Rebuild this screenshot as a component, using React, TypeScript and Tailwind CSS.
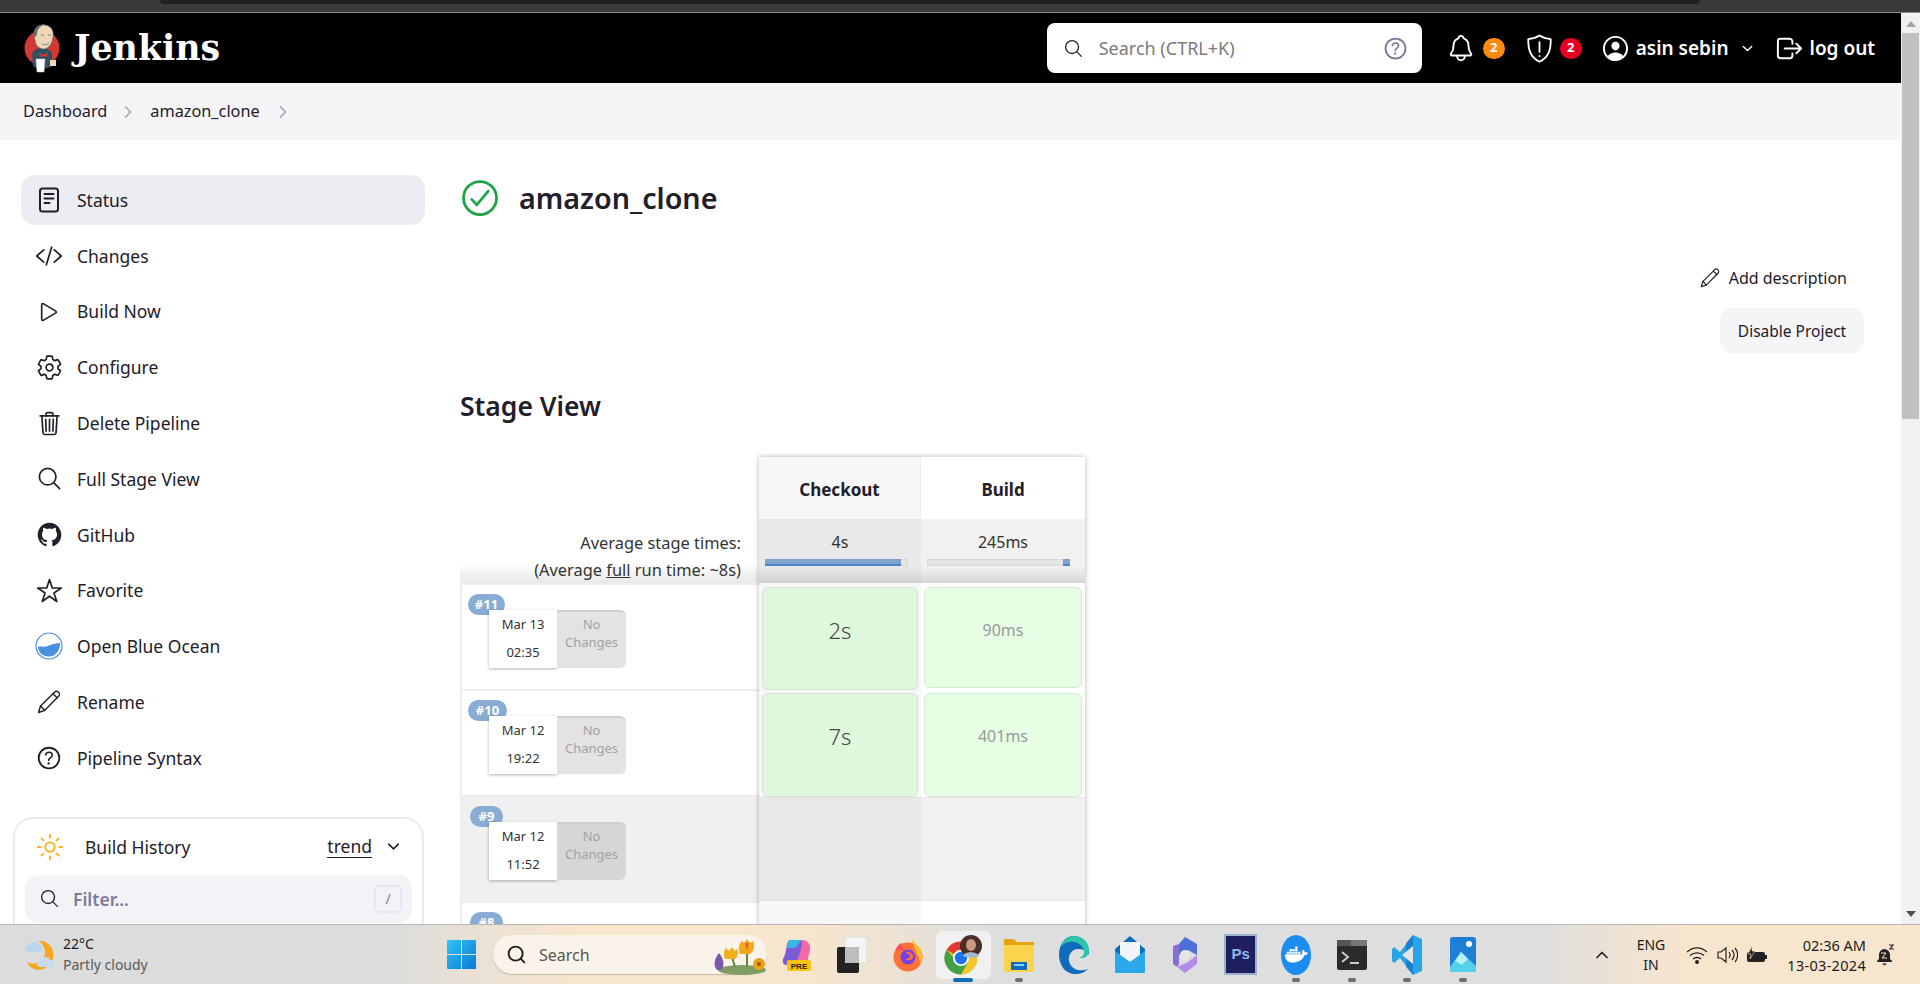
import { ChevronUp, Search } from 'lucide-react';
import type { ReactNode } from 'react';
import { FaDocker } from 'react-icons/fa';
import {
  IoChevronDown,
  IoChevronForward,
  IoCheckmarkCircleOutline,
  IoCodeSlashOutline,
  IoHelpCircleOutline,
  IoLogoGithub,
  IoLogOutOutline,
  IoNotificationsOutline,
  IoPersonCircleOutline,
  IoPlayOutline,
  IoSearchOutline,
  IoSettingsOutline,
  IoStarOutline,
  IoSunnyOutline,
  IoTrashOutline,
} from 'react-icons/io5';

const sans = 'font-["Noto_Sans",sans-serif]';

function StatusIcon() {
  return (
    <svg width="22" height="26" viewBox="0 0 22 26" fill="none" stroke="currentColor" strokeWidth="2" strokeLinecap="round">
      <rect x="2" y="1.5" width="18" height="23" rx="2.5" />
      <path d="M6.5 7h9M6.5 11.5h9M6.5 16h5" />
    </svg>
  );
}

function OceanIcon() {
  return (
    <svg width="28" height="28" viewBox="0 0 28 28">
      <circle cx="14" cy="14" r="13" fill="#fff" stroke="#4a90e2" strokeWidth="1.2" />
      <path d="M3 15c3-1 5 0 8-.5s6-3 14-3.5c.6 7-4.500 13.500-11 13.500S3 20 3 15z" fill="#4a90e2" />
    </svg>
  );
}

function PencilIcon({ size }: { size: number }) {
  return (
    <svg width={size} height={size} viewBox="0 0 24 24" fill="none" stroke="currentColor" strokeWidth="1.400" strokeLinejoin="round" strokeLinecap="round">
      <path d="M1.500 22.500l2-6.500L17.500 2.200c1.200-1.200 3-1.100 4.100 0 1.100 1.100 1.200 2.900 0 4.100L7.800 20.300z" />
      <path d="M3.500 16l4.300 4.300M16 3.700l4.300 4.300" />
    </svg>
  );
}

const navItems: { label: string; icon: ReactNode }[] = [
  { label: 'Changes', icon: <IoCodeSlashOutline size={28} /> },
  { label: 'Build Now', icon: <IoPlayOutline size={26} /> },
  { label: 'Configure', icon: <IoSettingsOutline size={27} /> },
  { label: 'Delete Pipeline', icon: <IoTrashOutline size={27} /> },
  { label: 'Full Stage View', icon: <IoSearchOutline size={27} /> },
  { label: 'GitHub', icon: <IoLogoGithub size={27} /> },
  { label: 'Favorite', icon: <IoStarOutline size={27} /> },
  { label: 'Open Blue Ocean', icon: <OceanIcon /> },
  { label: 'Rename', icon: <PencilIcon size={24} /> },
  { label: 'Pipeline Syntax', icon: <IoHelpCircleOutline size={30} /> },
];

const builds = [
  { id: '#11', date: 'Mar 13', time: '02:35', badge: 'w-[37px]', row: 'bg-white', box: 'bg-[#e3e3e3]' },
  { id: '#10', date: 'Mar 12', time: '19:22', badge: 'w-[39px]', row: 'bg-white', box: 'bg-[#e3e3e3]' },
  { id: '#9', date: 'Mar 12', time: '11:52', badge: 'w-[33px] ml-[2px]', row: 'bg-[#f0f0f0]', box: 'bg-[#d6d6d6]' },
  { id: '#8', date: 'Mar 12', time: '11:40', badge: 'w-[33px] ml-[2px]', row: 'bg-white', box: 'bg-[#e3e3e3]' },
];

function JenkinsLogo() {
  return (
    <svg width="38" height="50" viewBox="0 0 38 50">
      <circle cx="19" cy="25" r="17.500" fill="#d33833" />
      <path d="M9 32c1-5 5-7 10-7s10 2 10 7l1 10c-5 5-17 5-20 1z" fill="#335061" />
      <path d="M11 10c1-6 6-9 11-8 6 1 9 5 8 12-1 6-3 11-9 12-5 0-9-4-9-9-1-2-1-5-1-7z" fill="#f0d6b7" stroke="#49728b" strokeWidth=".6" />
      <path d="M11 15C9 8 13 1 22 1.500 17 3 14 6 14 12z" fill="#6d6b6d" />
      <path d="M16 30l4 2 5-3-1 5-3-1-4 1z" fill="#d33833" />
      <path d="M13 36h9l-1 13h-7z" fill="#fff" stroke="#ccc" strokeWidth=".5" />
      <path d="M27 37h6v6h-6z" fill="#f0d6b7" />
      <path d="M18 12h3M25 12h3M19 21c2 1 5 1 7-1" stroke="#49728b" strokeWidth=".8" fill="none" />
    </svg>
  );
}

function ShieldIcon() {
  return (
    <svg width="27" height="29" viewBox="0 0 25 27" fill="none" stroke="#fff" strokeWidth="1.7" strokeLinecap="round" strokeLinejoin="round">
      <path d="M12.500 1.500c3 2 6 3 10.500 3.300 0 9-1.500 16.700-10.500 21-9-4.300-10.500-12-10.500-21 4.500-.3 7.500-1.300 10.500-3.300z" />
      <path d="M12.500 7.500v9M12.500 20.500v.1" />
    </svg>
  );
}

function Header() {
  return (
    <header className="flex h-[70px] items-center bg-black text-white">
      <div className="ml-[23px]">
        <JenkinsLogo />
      </div>
      <span className="ml-[13px] font-['DejaVu_Serif',serif] text-[34.800px] leading-none font-bold">Jenkins</span>
      <div className="ml-auto flex h-[50px] w-[375px] items-center rounded-lg bg-white pr-[12px] pl-[16px]">
        <IoSearchOutline className="text-[#222]" size={21} />
        <span className="ml-[15px] pt-[1px] text-[18px] text-[#7b7b7b]">Search (CTRL+K)</span>
        <IoHelpCircleOutline className="ml-auto text-[#77779a]" size={29} />
      </div>
      <IoNotificationsOutline className="ml-[24px]" size={30} />
      <span className="ml-[7px] grid h-[21px] w-[22px] place-items-center rounded-full bg-[#ff8a0c] text-[13px] font-bold">2</span>
      <span className="ml-[21px]">
        <ShieldIcon />
      </span>
      <span className="ml-[7px] grid h-[21px] w-[22px] place-items-center rounded-full bg-[#e6001f] text-[13px] font-bold">2</span>
      <IoPersonCircleOutline className="ml-[18px]" size={31} />
      <span className="ml-[5px] text-[19px] font-semibold">asin sebin</span>
      <IoChevronDown className="ml-[11px]" size={15} />
      <IoLogOutOutline className="ml-[19px]" size={31} />
      <span className="mr-[26px] ml-[5px] text-[19px] font-semibold">log out</span>
    </header>
  );
}

function Breadcrumb() {
  return (
    <nav className="flex h-[57px] items-center bg-[#f5f5f7] pl-[23px] text-[16.300px] text-[#1f2029]">
      <span>Dashboard</span>
      <IoChevronForward className="ml-[12px] text-[#a9a9b8]" size={18} />
      <span className="ml-[13px]">amazon_clone</span>
      <IoChevronForward className="ml-[14px] text-[#a9a9b8]" size={18} />
    </nav>
  );
}

function Sidebar() {
  return (
    <aside className="w-[460px] shrink-0 pt-[35px] pl-[13px] text-[17.500px] text-[#1f2029]">
      <div className="ml-[8px] flex h-[50px] w-[404px] items-center rounded-[14px] bg-[#ecedf2]">
        <span className="grid w-[56px] place-items-center">
          <StatusIcon />
        </span>
        Status
      </div>
      {navItems.map((item) => (
        <div className="mt-[5.800px] ml-[8px] flex h-[50px] items-center" key={item.label}>
          <span className="grid w-[56px] place-items-center">{item.icon}</span>
          {item.label}
        </div>
      ))}
      <div className="mt-[34px] h-[180px] w-[411px] rounded-[20px] border-2 border-[#ebecf1] px-[10px]">
        <div className="flex h-[56px] items-center">
          <IoSunnyOutline className="ml-[10px] text-[#feb019]" size={30} />
          <span className="ml-[20px]">Build History</span>
          <span className="ml-auto border-b border-[#1f2029] leading-[21px]">trend</span>
          <IoChevronDown className="mr-[10px] ml-[13px]" size={17} />
        </div>
        <div className="flex h-[48px] items-center rounded-[14px] bg-[#f2f2f7] pr-[10px] pl-[14px]">
          <IoSearchOutline size={21} />
          <span className="ml-[13px] font-semibold text-[#7c7c96]">Filter...</span>
          <span className="ml-auto grid size-[28px] place-items-center rounded-md border-2 border-[#e6e6ee] text-[14px] text-[#7c7c96]">/</span>
        </div>
      </div>
    </aside>
  );
}

function BuildRow({ build }: { build: (typeof builds)[number] }) {
  return (
    <div className={`h-[106px] border-t-2 border-l-2 border-[#ededed] pt-[9px] pl-[6px] ${build.row}`}>
      <div className={`flex h-[21px] items-center justify-center rounded-full bg-[#88acd4] text-[13px] font-bold text-white ${build.badge}`}>{build.id}</div>
      <div className="-mt-[5px] ml-[21px] flex h-[58px] w-[137px] text-[13px]">
        <div className="flex w-[68px] flex-col items-center justify-around bg-white py-[1px] text-[#333] shadow-[0_1px_3px_rgba(0,0,0,.3)]">
          <span>{build.date}</span>
          <span>{build.time}</span>
        </div>
        <div className={`flex w-[69px] flex-col items-center rounded-r-md border-t-2 border-[#cfcfcf] pt-[3px] leading-[18px] text-[#a2a2a2] ${build.box}`}>
          <span>No</span>
          <span>Changes</span>
        </div>
      </div>
    </div>
  );
}

function TimeBar({ fill }: { fill: 'start' | 'end' }) {
  return (
    <div className={`ml-[6px] flex h-[7px] w-[143px] bg-[#e4e4e4] shadow-[inset_0_0_0_1px_#d8d8d8] ${fill === 'end' ? 'justify-end' : ''}`}>
      <div className={`h-full border-b-2 border-[#4f80d0] bg-[#7fa3cf] ${fill === 'end' ? 'w-[7px]' : 'w-[136px]'}`} />
    </div>
  );
}

function StageTable() {
  return (
    <div className="mt-[35px] flex">
      <div className="w-[299px]">
        <div className="h-[126px] bg-gradient-to-b from-white from-[85%] to-[#e8e8e8] pt-[72px] pr-[18px] text-right text-[16.400px] leading-[27px] text-[#333]">
          <div>Average stage times:</div>
          <div>
            (Average <span className="underline">full</span> run time: ~8s)
          </div>
        </div>
        {builds.map((build) => (
          <BuildRow build={build} key={build.id} />
        ))}
      </div>
      <div className="flex h-[600px] shadow-[0_0_5px_rgba(0,0,0,.3)]">
        <div className="w-[162px] bg-[#f7f7f7]">
          <div className="flex h-[62px] items-center justify-center border-r border-[#eee] pt-[4px] text-[17px] font-bold text-[#1f2029]">Checkout</div>
          <div className="h-[64px] bg-gradient-to-b from-[#e9e9e9] from-[75%] to-[#cfcfcf] pt-[13px] text-center text-[16px] leading-[20px] text-[#333]">
            4s
            <div className="mt-[7px]">
              <TimeBar fill="start" />
            </div>
          </div>
          <div className="mx-[3px] mt-[4px] grid h-[103px] place-items-center rounded-md border border-[#cfe6cf] bg-[#dff7dd] pb-[16px] text-[22px] font-light text-[#444]">2s</div>
          <div className="mx-[3px] mt-[3px] grid h-[104px] place-items-center rounded-md border border-[#cfe6cf] bg-[#dff7dd] pb-[18px] text-[22px] font-light text-[#444]">7s</div>
          <div className="h-[104px] border-y border-[#e2e2e2] bg-[#e9e9e9]" />
        </div>
        <div className="w-[164px] bg-white">
          <div className="flex h-[62px] items-center justify-center pt-[4px] text-[17px] font-bold text-[#1f2029]">Build</div>
          <div className="h-[64px] bg-gradient-to-b from-[#f1f1f1] from-[75%] to-[#d6d6d6] pt-[13px] text-center text-[16px] leading-[20px] text-[#333]">
            245ms
            <div className="mt-[7px]">
              <TimeBar fill="end" />
            </div>
          </div>
          <div className="mx-[3px] mt-[4px] grid h-[101px] place-items-center rounded-md border border-[#d4ead2] bg-[#e6ffe4] pb-[16px] text-[16px] text-[#999]">90ms</div>
          <div className="mx-[3px] mt-[5px] grid h-[104px] place-items-center rounded-md border border-[#d4ead2] bg-[#e6ffe4] pb-[18px] text-[16px] text-[#999]">401ms</div>
          <div className="h-[104px] border-y border-[#e8e8e8] bg-[#f1f1f1]" />
        </div>
      </div>
    </div>
  );
}

function Content() {
  return (
    <main className="min-w-0 flex-1 pt-[35px] pr-[37px] text-[#1f2029]">
      <div className="flex h-[46px] items-center">
        <IoCheckmarkCircleOutline className="-ml-[2px] text-[#1ea446]" size={44} />
        <h1 className="ml-[17px] text-[28.700px] font-semibold">amazon_clone</h1>
      </div>
      <div className="mt-[44px] flex h-[26px] items-center justify-end pr-[17px] text-[16px]">
        <span className="mr-[9px]">
          <PencilIcon size={20} />
        </span>
        Add description
      </div>
      <div className="mt-[17px] flex justify-end">
        <div className="grid h-[45px] w-[144px] place-items-center rounded-xl bg-[#f5f5f7] pt-[2px] text-[15.500px]">Disable Project</div>
      </div>
      <h2 className="mt-[37px] text-[26.500px] leading-[32px] font-semibold">Stage View</h2>
      <StageTable />
    </main>
  );
}

function Scrollbar() {
  return (
    <div className="flex w-[19px] shrink-0 flex-col items-center bg-[#f1f1f1]">
      <div className="mt-[8px] size-0 border-x-[5px] border-b-[6px] border-x-transparent border-b-[#a3a3a3]" />
      <div className="mt-[6px] h-[386px] w-[17px] bg-[#c1c1c1]" />
      <div className="mt-auto mb-[7px] size-0 border-x-[5px] border-t-[6px] border-x-transparent border-t-[#505050]" />
    </div>
  );
}

function WeatherIcon() {
  return (
    <svg width="32" height="36" viewBox="0 0 32 36">
      <path d="M14 4c10-1 17 7 15 17-2 9-12 15-21 10-2-1-4-4-5-6 9 4 18 0 18-10 0-5-3-9-7-11z" fill="#f6a623" />
      <path d="M1 12c0-3 2-4 4-4 1-4 8-4 9 0 3 0 4 2 4 4s-1 3-3 3H4c-2 0-3-1-3-3z" fill="#bcd3f0" />
      <path d="M13 27c0-3 2-4 4-4 1-4 8-4 9 0 3 0 4 2 4 4s-1 3-3 3H16c-2 0-3-1-3-3z" fill="#c7daf3" />
    </svg>
  );
}

function WindowsLogo() {
  return (
    <svg width="29" height="29" viewBox="0 0 29 29">
      <defs>
        <linearGradient id="win" x1="0" y1="0" x2="1" y2="1">
          <stop offset="0" stopColor="#2fc4f7" />
          <stop offset="1" stopColor="#0a78d4" />
        </linearGradient>
      </defs>
      <path d="M1 0h13v14H0V1a1 1 0 0 1 1-1zM15 0h13a1 1 0 0 1 1 1v13H15zM0 15h14v14H1a1 1 0 0 1-1-1zM15 15h14v13a1 1 0 0 1-1 1H15z" fill="url(#win)" />
    </svg>
  );
}

function Flowers() {
  return (
    <svg width="58" height="36" viewBox="0 0 58 36">
      <ellipse cx="33" cy="31" rx="24" ry="5" fill="#7f9d62" />
      <path d="M8 31c-4-4-3-11 2-17 5 6 6 13 2 17z" fill="#7a5aa6" />
      <path d="M26 28l-3-10M38 28V12" stroke="#5e8a3c" strokeWidth="2" />
      <path d="M16 20c-2-5-1-9 1-11l3 3 3-4 3 4 2-2c2 4 1 8-2 10z" fill="#f3b21d" />
      <path d="M31 15c-2-5-1-10 2-13l2 2 3-4 3 4 3-2c2 5 1 10-3 13z" fill="#f5a81c" />
      <path d="M36 4l2 8 2-8z" fill="#e2641b" />
      <circle cx="50" cy="25" r="6" fill="#e9a21a" />
      <circle cx="50" cy="25" r="2" fill="#a8540f" />
    </svg>
  );
}

const taskIcons: { key: string; icon: ReactNode; running?: boolean; active?: boolean }[] = [
  {
    key: 'copilot',
    icon: (
      <svg width="32" height="34" viewBox="0 0 32 34">
        <path d="M9 2h12c6 0 3 9 2 13-1 5-3 12-9 12H6c-5 0-5-5-3-8 3-5 2-17 6-17z" fill="#7c5cd8" />
        <path d="M21 2c6 0 9 5 8 10l-3 12c-4 2-8 1-10-2 3-6 5-14 5-20z" fill="#f06aa6" />
        <path d="M9 2h12c-4 2-5 8-8 8H6c0-4 1-8 3-8z" fill="#35b8e8" />
        <rect x="6" y="22" width="24" height="11" rx="2" fill="#ffc20e" />
        <text x="18" y="31" textAnchor="middle" fontSize="8" fontWeight="800" fill="#222" fontFamily="Liberation Sans">PRE</text>
      </svg>
    ),
  },
  {
    key: 'tiles',
    icon: (
      <svg width="31" height="36" viewBox="0 0 31 36">
        <rect x="8" y="0" width="22" height="26" rx="2" fill="#f4f4f4" stroke="#ddd" />
        <rect x="0" y="10" width="22" height="26" rx="2" fill="#222" />
        <rect x="8" y="10" width="14" height="16" fill="#bdbdbd" />
      </svg>
    ),
  },
  {
    key: 'firefox',
    icon: (
      <svg width="30" height="34" viewBox="0 0 30 34">
        <circle cx="15" cy="19" r="14.500" fill="#ff7139" />
        <path d="M19 0c1 5 9 8 10 16 1 4 0 8-2 11C27 17 20 12 19 0z" fill="#ffbd2e" />
        <path d="M3 12c0-3 3-6 6-7-1 3 0 5 3 6-4 1-7 3-9 1z" fill="#ff4f5e" />
        <circle cx="15" cy="19" r="7.500" fill="#7542e5" />
        <path d="M12 14c5-1 9 2 8 6-2 3-6 3-8 1 3 0 5-1 5-3-1-2-3-3-5-4z" fill="#ff7139" />
      </svg>
    ),
  },
  {
    key: 'chrome',
    active: true,
    running: true,
    icon: (
      <svg width="40" height="42" viewBox="0 0 40 42">
        <circle cx="18" cy="24" r="16.500" fill="#f6c42b" />
        <path d="M18 7.500A16.500 16.500 0 0 1 32.300 15.700H18a8.300 8.300 0 0 0-7.200 4.200L3.700 15.700A16.500 16.500 0 0 1 18 7.500z" fill="#e53935" />
        <path d="M3.700 15.700A16.500 16.500 0 0 0 18 40.500l7.200-12.400a8.300 8.300 0 0 1-14.400-4.100z" fill="#43a047" />
        <circle cx="18" cy="24" r="8" fill="#fff" />
        <circle cx="18" cy="24" r="6.200" fill="#1a73e8" />
        <circle cx="28" cy="12" r="11" fill="#4a2f28" />
        <ellipse cx="28" cy="11" rx="5" ry="6" fill="#c79a80" />
        <path d="M20 22c1-5 14-5 16 0-4 2-12 2-16 0z" fill="#a3b8d6" />
      </svg>
    ),
  },
  {
    key: 'folder',
    running: true,
    icon: (
      <svg width="30" height="34" viewBox="0 0 30 34">
        <path d="M0 2a1 1 0 0 1 1-1h9l3 3h16a1 1 0 0 1 1 1v6H0z" fill="#e5a50a" />
        <path d="M0 7h30v26a1 1 0 0 1-1 1H1a1 1 0 0 1-1-1z" fill="#fcd34d" />
        <path d="M7 24h16v8H7z" fill="#0f6cbd" />
        <path d="M10 26h10v2H10z" fill="#7fd0f5" />
      </svg>
    ),
  },
  {
    key: 'edge',
    icon: (
      <svg width="31" height="40" viewBox="0 0 31 40">
        <path d="M15 1C6 1 0 9 0 20c0 11 7 19 16 19 6 0 10-2 13-5-8 3-17 1-19-8-1-6 3-12 9-12 6 0 11 3 11 7 1-11-5-20-15-20z" fill="#0f6cbd" />
        <path d="M15 1C8 1 3 6 1 13c3-5 9-7 14-6 6 1 10 5 10 10 0 3-2 5-5 6 6 1 10-2 10-8C30 7 23 1 15 1z" fill="#2ec4a8" />
      </svg>
    ),
  },
  {
    key: 'mail',
    icon: (
      <svg width="30" height="37" viewBox="0 0 30 37">
        <path d="M0 13L15 0l15 13v22a2 2 0 0 1-2 2H2a2 2 0 0 1-2-2z" fill="#0f6cbd" />
        <path d="M5 6h20v15l-10 5-10-5z" fill="#f2f6fb" />
        <path d="M0 15l15 11 15-11v20a2 2 0 0 1-2 2H2a2 2 0 0 1-2-2z" fill="#29a9ea" />
      </svg>
    ),
  },
  {
    key: 'm365',
    icon: (
      <svg width="28" height="36" viewBox="0 0 28 36">
        <path d="M14 0l12 7v11l-9-5-9 5V7z" fill="#4d6fd8" />
        <path d="M2 9l6-2v20l-2 3-4-3z" fill="#8a6ed8" />
        <path d="M26 18v9l-12 9-8-6 11-5z" fill="#b48ae8" />
        <circle cx="14" cy="18" r="5" fill="#e6e6e6" />
      </svg>
    ),
  },
  {
    key: 'ps',
    icon: (
      <div className="grid h-[37px] w-[29px] place-items-center bg-[#1f1f5f] font-['Liberation_Sans',sans-serif] text-[15px] font-bold text-[#8fb8f0] shadow-[0_0_0_2px_#9ab0c8]">Ps</div>
    ),
  },
  {
    key: 'docker',
    running: true,
    icon: (
      <div className="grid h-[40px] w-[30px] place-items-center rounded-[50%] bg-[#1d8cf0] text-white">
        <FaDocker size={23} />
      </div>
    ),
  },
  {
    key: 'terminal',
    running: true,
    icon: (
      <svg width="30" height="30" viewBox="0 0 30 30">
        <rect width="30" height="30" rx="2" fill="#2b2b2b" />
        <rect width="30" height="6" fill="#555" />
        <rect x="14" width="16" height="6" fill="#777" />
        <path d="M5 12l6 5-6 5" stroke="#ccc" strokeWidth="2" fill="none" />
        <path d="M13 23h9" stroke="#ccc" strokeWidth="2" />
      </svg>
    ),
  },
  {
    key: 'vscode',
    running: true,
    icon: (
      <svg width="30" height="40" viewBox="0 0 30 40">
        <path d="M30 4L21 0 8 17 2 12 0 14v12l2 2 6-5 13 17 9-4z" fill="#2aa4e8" />
        <path d="M21 0v40l-7-8V8z" fill="#0f6cbd" opacity=".6" />
        <path d="M21 11L10 20l11 9z" fill="#e4e4e4" />
      </svg>
    ),
  },
  {
    key: 'photos',
    running: true,
    icon: (
      <svg width="26" height="35" viewBox="0 0 26 35">
        <rect width="26" height="35" rx="3" fill="#1f7fd6" />
        <circle cx="19" cy="7" r="3" fill="#fff" />
        <path d="M0 30l11-15 15 14v3a3 3 0 0 1-3 3H3a3 3 0 0 1-3-3z" fill="#53d1e8" />
        <path d="M11 15l7 7-6 6-7-4z" fill="#b4f0f8" />
      </svg>
    ),
  },
];

function Taskbar() {
  return (
    <footer className="flex h-[60px] items-center border-t border-[#b5b5b5] bg-[linear-gradient(90deg,#dcdcdc_0%,#dcdcdc_20%,#f8e5cd_30%,#f8e5cd_42%,#dedede_52%,#dedede_80%,#f8e5cd_88%,#f8e5cd_100%)] text-[14px] text-[#1b1b1b]">
      <div className="ml-[24px]">
        <WeatherIcon />
      </div>
      <div className="ml-[7px] w-[200px] pb-[2px] leading-[21px]">
        <div>22°C</div>
        <div className="text-[#5b5b5b]">Partly cloudy</div>
      </div>
      <div className="ml-[184px]">
        <WindowsLogo />
      </div>
      <div className="ml-[17px] flex h-[39px] w-[274px] items-center rounded-full bg-[#faf3e9] pl-[13px] shadow-[0_1px_1px_rgba(0,0,0,.2)]">
        <Search className="text-[#222]" size={21} strokeWidth={2.2} />
        <span className="ml-[12px] text-[16px] text-[#555]">Search</span>
        <span className="mt-[4px] ml-auto">
          <Flowers />
        </span>
      </div>
      <div className="ml-[2px] flex h-[48px] w-[721px] shrink-0 items-center">
        {taskIcons.map((item) => (
          <div
            className={`relative grid h-[48px] w-[55.500px] shrink-0 place-items-center rounded-md ${item.active ? 'bg-[#f1f1f1]' : ''}`}
            key={item.key}
          >
            {item.icon}
            {item.running ? (
              <span className={`absolute bottom-[-3px] h-[4px] rounded-full ${item.active ? 'w-[20px] bg-[#0f6cbd]' : 'w-[8px] bg-[#6e6e6e]'}`} />
            ) : null}
          </div>
        ))}
      </div>
      <ChevronUp className="ml-[102px] text-[#222]" size={20} strokeWidth={2} />
      <div className="ml-[17px] flex w-[44px] flex-col items-center leading-[20px]">
        <span>ENG</span>
        <span>IN</span>
      </div>
      <svg className="ml-[13px]" width="22" height="18" viewBox="0 0 22 18" fill="none" stroke="#222" strokeWidth="1.300">
        <path d="M1 6c6-5.500 14-5.500 20 0M4 9.500c4-3.500 10-3.500 14 0M7 13c2-2 6-2 8 0" />
        <circle cx="11" cy="16" r="1.300" fill="#222" />
      </svg>
      <svg className="ml-[9px]" width="21" height="18" viewBox="0 0 21 18" fill="none" stroke="#222" strokeWidth="1.200">
        <path d="M1 6h3l5-4v14l-5-4H1zM12 6c1.500 2 1.500 4 0 6M15 4c2.500 3 2.500 7 0 10M18 2c3.500 4 3.500 10 0 14" />
      </svg>
      <svg className="ml-[8px]" width="22" height="18" viewBox="0 0 22 18">
        <rect x="1" y="6" width="18" height="10" rx="2" fill="#222" />
        <rect x="19" y="9" width="2" height="4" fill="#222" />
        <path d="M6 0L2 8h3l-1 5 5-8H6z" fill="#222" stroke="#f8e5cd" strokeWidth=".6" />
      </svg>
      <div className="ml-auto flex flex-col items-end pr-[10px] text-[14.500px] leading-[20px]">
        <span>02:36 AM</span>
        <span className="tracking-[.3px]">13-03-2024</span>
      </div>
      <svg className="mr-[26px]" width="18" height="24" viewBox="0 0 18 24">
        <path d="M8 6c-3 .5-5 3-5 6v4l-2 2v1h15v-1l-2-2v-4c0-3-2-5.500-6-6z" fill="#222" />
        <path d="M6 20.500h5l-2.500 2z" fill="#222" />
        <path d="M5 10h5l-4 5h5" fill="none" stroke="#f8e5cd" strokeWidth="1" />
        <path d="M13 2h4l-3 4h4" fill="none" stroke="#222" strokeWidth="1.200" />
      </svg>
    </footer>
  );
}

export default function App() {
  return (
    <div className={`flex h-[984px] w-[1920px] flex-col overflow-hidden bg-white ${sans}`}>
      {/* browser chrome edge */}
      <div className="h-[13px] shrink-0 border-b border-[#8a8a8a] bg-[#3a3a3a] pl-[160px]">
        <div className="h-[4px] w-[1540px] rounded-b-xl bg-[#202124]" />
      </div>
      <div className="flex min-h-0 flex-1">
        <div className="flex min-w-0 flex-1 flex-col">
          <Header />
          <Breadcrumb />
          <div className="flex min-h-0 flex-1 overflow-hidden">
            <Sidebar />
            <Content />
          </div>
        </div>
        <Scrollbar />
      </div>
      <Taskbar />
    </div>
  );
}
